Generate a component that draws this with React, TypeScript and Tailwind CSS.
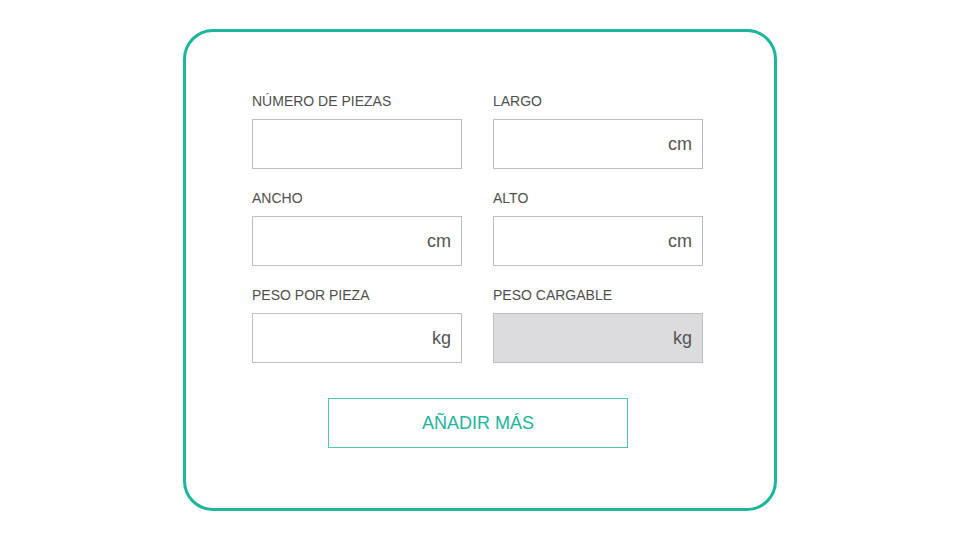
const fields = [
  { label: "NÚMERO DE PIEZAS", unit: "", disabled: false },
  { label: "LARGO", unit: "cm", disabled: false },
  { label: "ANCHO", unit: "cm", disabled: false },
  { label: "ALTO", unit: "cm", disabled: false },
  { label: "PESO POR PIEZA", unit: "kg", disabled: false },
  { label: "PESO CARGABLE", unit: "kg", disabled: true },
];

export default function App() {
  return (
    <div className="w-[960px] h-[540px] bg-white pt-[29px] font-['Liberation_Sans',Arial,sans-serif]">
      <div className="ml-[183px] w-[594px] h-[482px] rounded-[30px] border-[3px] border-[#1db59d] pt-[59px] pl-[66px]">
        <div className="grid grid-cols-[210px_210px] gap-x-[31px] gap-y-[19px]">
          {fields.map((f) => (
            <div key={f.label}>
              <div className="h-5 mb-2 text-[14px] leading-5 text-[#4f4f4f]">{f.label}</div>
              <div
                className={`h-[50px] border border-[#bfbfbf] flex items-center justify-end pr-[10px] text-[18px] text-[#555] ${
                  f.disabled ? "bg-[#dcdbdd]" : "bg-white"
                }`}
              >
                {f.unit}
              </div>
            </div>
          ))}
        </div>
        <div className="mt-[35px] ml-[76px]">
          <button className="w-[300px] h-[50px] border border-[#4cc9b2] text-[#20b59c] text-[18px]">
            AÑADIR MÁS
          </button>
        </div>
      </div>
    </div>
  );
}
